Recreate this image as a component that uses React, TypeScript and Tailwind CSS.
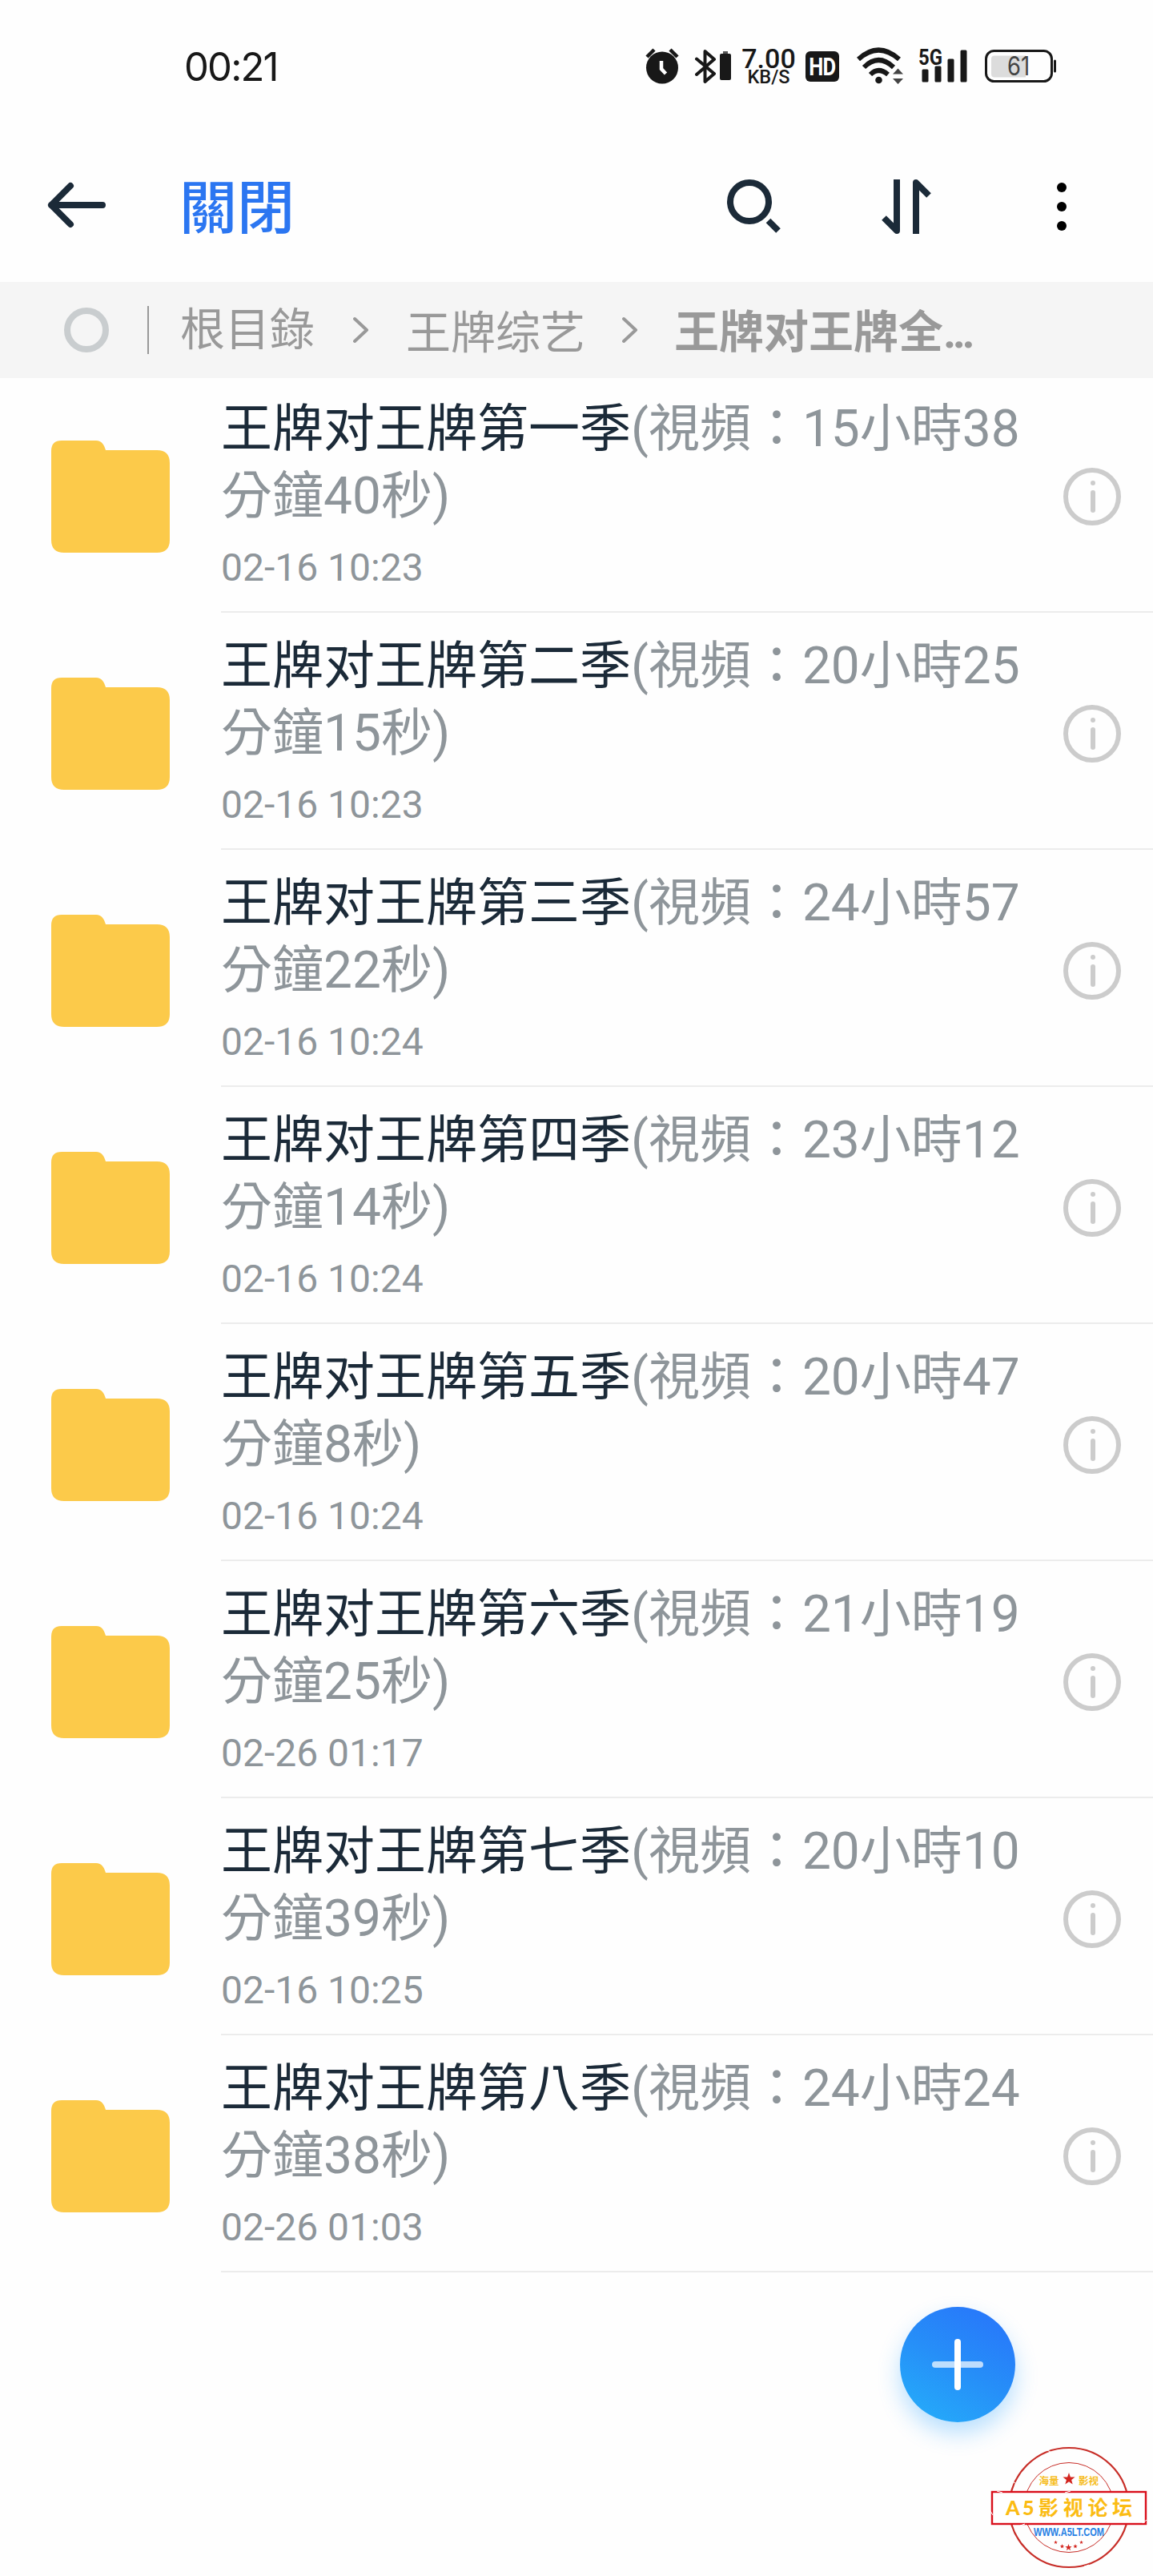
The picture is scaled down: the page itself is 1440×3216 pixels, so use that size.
import React from "react";

const seasons = [
  { name: "王牌对王牌第一季", first: "(視頻：15小時38", rest: "分鐘40秒)", date: "02-16 10:23" },
  { name: "王牌对王牌第二季", first: "(視頻：20小時25", rest: "分鐘15秒)", date: "02-16 10:23" },
  { name: "王牌对王牌第三季", first: "(視頻：24小時57", rest: "分鐘22秒)", date: "02-16 10:24" },
  { name: "王牌对王牌第四季", first: "(視頻：23小時12", rest: "分鐘14秒)", date: "02-16 10:24" },
  { name: "王牌对王牌第五季", first: "(視頻：20小時47", rest: "分鐘8秒)", date: "02-16 10:24" },
  { name: "王牌对王牌第六季", first: "(視頻：21小時19", rest: "分鐘25秒)", date: "02-26 01:17" },
  { name: "王牌对王牌第七季", first: "(視頻：20小時10", rest: "分鐘39秒)", date: "02-16 10:25" },
  { name: "王牌对王牌第八季", first: "(視頻：24小時24", rest: "分鐘38秒)", date: "02-26 01:03" },
];

function StatusBar() {
  return (
    <div className="flex h-[166px] items-center pl-[230px] text-[#181818]">
      <div className="w-[576px] pt-px font-['Inter'] text-[49px] leading-[60px] tracking-[-1.8px]">00:21</div>
      <svg className="mr-5" width="42" height="48" viewBox="0 0 42 48" fill="none">
        <circle cx="21" cy="25.500" r="20" fill="currentColor" />
        <path d="M2 12 11 3M40 12 31 3" stroke="currentColor" strokeWidth="4.500" />
        <path d="M20 17v10l5.500 6" stroke="#fff" strokeWidth="4.500" />
      </svg>
      <svg className="mr-[13px]" width="46" height="48" viewBox="0 0 46 48" fill="none">
        <path d="M2 14.500 24 33 12.500 43V5L24 15 2 34" stroke="currentColor" strokeWidth="4" strokeLinejoin="round" strokeLinecap="round" />
        <rect x="31" y="8" width="14" height="33" rx="2" fill="currentColor" />
        <rect x="35" y="5" width="6" height="3" fill="#555" />
      </svg>
      <div className="mr-[13px] flex w-[66px] flex-col items-center pt-px font-['Roboto'] font-medium">
        <span className="text-[34px] leading-[25px]">7.00</span>
        <span className="text-[23.5px] leading-[20px]">KB/S</span>
      </div>
      <div className="mr-[22px] flex h-[38px] w-[42px] items-center justify-center rounded-[6px] bg-[#181818] font-['Roboto'] text-[32px] leading-none font-bold tracking-[-1px] text-white">
        <span className="scale-x-[0.8]">HD</span>
      </div>
      <svg className="mr-[18px]" width="59" height="50" viewBox="0 0 59 50" fill="none">
        <g stroke="currentColor" strokeWidth="6">
          <path d="M2 16Q27-7 53 16" />
          <path d="M9 26Q27 8 46 26" />
          <path d="M17 35Q27 25 39 35" />
        </g>
        <circle cx="27.500" cy="42" r="4.300" fill="currentColor" />
        <path d="M45 34.500 51.500 27.500 58 34.500ZM45 40 51.500 47 58 40Z" fill="#444" />
      </svg>
      <svg className="mr-[21px] overflow-visible" width="62" height="50" viewBox="0 0 62 50" fill="currentColor">
        <text x="0" y="22.500" fontFamily="Roboto" fontWeight="700" fontSize="28" textLength="30" lengthAdjust="spacingAndGlyphs">5G</text>
        <rect x="4.500" y="28.500" width="8" height="16" rx="1.500" />
        <rect x="20.500" y="24.500" width="8" height="20" rx="1.500" />
        <rect x="36.500" y="15.500" width="8" height="29" rx="1.500" />
        <rect x="52.500" y="4.500" width="8" height="40" rx="1.500" />
      </svg>
      <svg width="91" height="44" viewBox="0 0 91 44" fill="none">
        <rect x="1.500" y="2.500" width="82" height="38" rx="10" stroke="currentColor" strokeWidth="3" />
        <path d="M12 8.500h39v27H12a4 4 0 0 1-4-4v-19a4 4 0 0 1 4-4Z" fill="#dcdcdc" />
        <path d="M87.500 15v13" stroke="currentColor" strokeWidth="3" strokeLinecap="round" />
        <text x="28" y="33" fontFamily="Inter" fontSize="32" fill="#444" textLength="28" lengthAdjust="spacingAndGlyphs">61</text>
      </svg>
    </div>
  );
}

function Toolbar() {
  return (
    <header className="flex h-[186px] items-center pb-[2px] text-[#1b2a38]">
      <svg className="ml-[58px] mt-[-4px]" width="76" height="60" viewBox="0 0 76 60" fill="none" stroke="currentColor" strokeWidth="8" strokeLinecap="round" strokeLinejoin="round">
        <path d="M6 30H70M30 6 6 30 30 54" />
      </svg>
      <h1 className="ml-[90px] w-[682px] pb-2 font-['Noto_Sans_CJK_TC',sans-serif] text-[72px] leading-[84px] font-medium text-[#2b76f1]">關閉</h1>
      <svg width="72" height="72" viewBox="0 0 72 72" fill="none" stroke="currentColor">
        <circle cx="30" cy="30" r="24" strokeWidth="8" />
        <path d="M53.500 53.500 66 66" strokeWidth="8" />
      </svg>
      <svg className="ml-[122px]" width="64" height="72" viewBox="0 0 64 72" fill="none" stroke="currentColor" strokeWidth="8">
        <path d="M20 2V66L4 50M44 70V6L60 22" strokeLinejoin="round" />
      </svg>
      <svg className="ml-[154px]" width="16" height="64" viewBox="0 0 16 64" fill="#000">
        <circle cx="8" cy="8" r="6" />
        <circle cx="8" cy="32" r="6" />
        <circle cx="8" cy="56" r="6" />
      </svg>
    </header>
  );
}

function Chevron() {
  return (
    <svg width="20" height="36" viewBox="0 0 20 36" fill="none" stroke="#999" strokeWidth="4" strokeLinecap="round" strokeLinejoin="round">
      <path d="M2 4 17 18 2 32" />
    </svg>
  );
}

function Breadcrumb() {
  return (
    <nav className="flex h-[120px] items-center bg-[#f5f5f5] font-['Roboto','Noto_Sans_CJK_SC',sans-serif] text-[56px] leading-[80px] whitespace-nowrap text-[#999]">
      <span className="ml-20 size-14 rounded-full border-8 border-[#c9cdcf]" />
      <span className="mr-[39px] ml-12 h-[60px] w-[2px] bg-[#999]" />
      <span className="w-[216px] pb-px" lang="zh-Hant">根目錄</span>
      <Chevron />
      <span className="ml-[46px] w-[270px] pt-[7px]">王牌综艺</span>
      <Chevron />
      <span className="ml-[45px] pt-[5px] font-bold">
        王牌对王牌全<span className="tracking-[-4.5px]">...</span>
      </span>
    </nav>
  );
}

function FolderIcon() {
  return (
    <svg width="148" height="140" viewBox="0 0 148 140" fill="#fcca4a">
      <path d="M13 0H56C63 0 66 5 68 12H132Q148 12 148 28V124Q148 140 132 140H16Q0 140 0 124V13Q0 0 13 0Z" />
    </svg>
  );
}

function InfoIcon() {
  return (
    <svg width="72" height="72" viewBox="0 0 72 72" fill="none" stroke="#ccc" strokeWidth="6" strokeLinecap="round">
      <circle cx="36" cy="36" r="33" />
      <path d="M37 31V53" />
      <circle cx="37" cy="19" r="3" fill="#ccc" stroke="none" />
    </svg>
  );
}

function SeasonRow({ season }: { season: (typeof seasons)[number] }) {
  return (
    <li className="flex h-[296px] items-end pl-16 first:h-[293px]">
      <div className="mb-[75px] w-[212px]">
        <FolderIcon />
      </div>
      <div className="flex flex-1 items-end border-b-2 border-[#ececec]">
        <div className="w-[1052px] pb-6 font-['Roboto','Noto_Sans_CJK_TC',sans-serif] whitespace-nowrap text-[#8e959a]">
          <p className="text-[64px] leading-[84px]">
            <span className="text-[#1b2a38]">{season.name}</span>
            {season.first}
            <br />
            {season.rest}
          </p>
          <p className="mt-[17px] text-[48px] leading-[60px]">{season.date}</p>
        </div>
        <div className="mb-[107px]">
          <InfoIcon />
        </div>
      </div>
    </li>
  );
}

function AddButton() {
  return (
    <button className="absolute top-[2880px] left-[1124px] flex size-36 items-center justify-center rounded-full bg-linear-[210deg] from-[#2872fb] via-[#268ef8] to-[#25b0fa] shadow-[0_14px_28px_rgba(38,160,255,0.32)]">
      <svg width="64" height="64" viewBox="0 0 64 64" stroke="#fff" strokeWidth="8" strokeLinecap="round">
        <path d="M4 32H60" strokeOpacity="0.7" />
        <path d="M32 4V60" />
      </svg>
    </button>
  );
}

const star = "M0-8 1.900-2.600 7.600-2.500 3.100 1 4.700 6.500 0 3.200-4.700 6.500-3.100 1-7.600-2.500-1.900-2.600Z";

function ForumStamp() {
  return (
    <svg className="absolute top-[3050px] left-[1230px]" width="210" height="162" viewBox="1230 3050 210 162" fill="none" fontFamily="'Noto Sans CJK SC', sans-serif">
      <circle cx="1335" cy="3130.500" r="74.500" stroke="#c72d27" strokeWidth="2.200" />
      <circle cx="1335" cy="3130.500" r="56" stroke="#c72d27" strokeWidth="1" />
      <rect x="1239" y="3111" width="192" height="40" fill="#fff" stroke="#d9101c" strokeWidth="2.400" />
      <path d="M1245 3110 1252 3112M1330 3112 1337 3110M1427 3150 1432 3146M1240 3140 1237 3135M1280 3151 1274 3153M1268 3100 1265 3098M1306 3058 1312 3061M1354 3204 1360 3202" stroke="#fff" strokeWidth="1" />
      <g fontWeight="700" fill="#f6bd21">
        <text x="1297.500" y="3101.500" fontSize="12.500">海量</text>
        <text x="1347" y="3101.500" fontSize="12.500">影视</text>
        <g fill="#fbbc14">
          <text x="1256" y="3140" fontSize="25" fontFamily="Lato" fontWeight="900">A</text>
          <text x="1277" y="3140" fontSize="25" fontFamily="Lato" fontWeight="900">5</text>
          <text x="1297" y="3140" fontSize="25" letterSpacing="5.700">影视论坛</text>
        </g>
      </g>
      <text x="1291" y="3165.500" fontFamily="Liberation Sans" fontWeight="700" fontSize="14" fill="#2680e4" textLength="88" lengthAdjust="spacingAndGlyphs">WWW.A5LT.COM</text>
      <g fill="#d2251f">
        <path d={star} transform="translate(1335 3095)" />
        <path d={star} transform="translate(1318.500 3174) scale(.32)" />
        <path d={star} transform="translate(1326.500 3179) scale(.36)" />
        <path d={star} transform="translate(1334.500 3180.500) scale(.55)" />
        <path d={star} transform="translate(1343 3179) scale(.36)" />
        <path d={star} transform="translate(1350.500 3174) scale(.32)" />
      </g>
    </svg>
  );
}

export default function App() {
  return (
    <div className="relative h-[3216px] w-[1440px] overflow-hidden bg-[#fefefe]">
      <StatusBar />
      <Toolbar />
      <Breadcrumb />
      <ul>
        {seasons.map((season) => (
          <SeasonRow key={season.name} season={season} />
        ))}
      </ul>
      <AddButton />
      <ForumStamp />
    </div>
  );
}
